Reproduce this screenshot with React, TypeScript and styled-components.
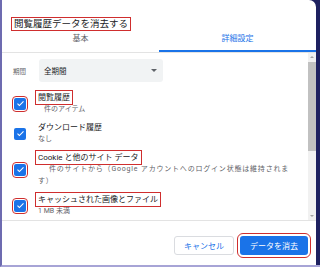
import React from "react";
import styled, { createGlobalStyle, css } from "styled-components";

const Global = createGlobalStyle`
  html, body { margin: 0; padding: 0; background: #1e2160; }
  body { width: 320px; height: 267px; overflow: hidden; }
  * { box-sizing: border-box; }
`;

const FONT = `Roboto, "Noto Sans CJK JP", "Noto Sans", sans-serif`;

const Frame = styled.div`
  width: 320px;
  height: 267px;
  display: flex;
  background: #1e2160;
  border-left: 2px solid #6d6bb0;
  border-bottom: 2px solid #a7a4d6;
  padding-right: 4px;
  font-family: ${FONT};
`;

const Dialog = styled.div`
  flex: 1;
  display: flex;
  flex-direction: column;
  background: #ffffff;
  border-top-right-radius: 7px;
  overflow: hidden;
`;

const Marked = css`
  outline: 1.5px solid #cf2e2e;
  outline-offset: 1px;
`;

const Header = styled.div`
  padding: 12px 0 0 11px;
  height: 28px;
`;

const Title = styled.span`
  display: inline-block;
  font-size: 9.5px;
  line-height: 10px;
  color: #202124;
  padding: 0 1px;
  ${Marked}
`;

const TabBar = styled.div`
  display: flex;
  height: 25px;
  border-bottom: 1px solid #e3e3e3;
`;

const Tab = styled.div<{ $active?: boolean }>`
  flex: 1;
  display: flex;
  align-items: center;
  justify-content: center;
  font-size: 8px;
  color: ${(p) => (p.$active ? "#1a73e8" : "#5f6368")};
  border-bottom: 2px solid ${(p) => (p.$active ? "#1a73e8" : "transparent")};
  padding-bottom: 3px;
`;

const Body = styled.div`
  height: 168px;
  display: flex;
  border-bottom: 1px solid #e3e3e3;
`;

const Content = styled.div`
  flex: 1;
  display: flex;
  flex-direction: column;
  padding: 6px 0 0 11px;
`;

const PeriodRow = styled.div`
  display: flex;
  align-items: center;
  gap: 13px;
  margin-bottom: 10px;
`;

const PeriodLabel = styled.span`
  font-size: 6.5px;
  color: #5f6368;
`;

const Select = styled.div`
  width: 124px;
  height: 23px;
  background: #f1f3f4;
  border-radius: 3px;
  display: flex;
  align-items: center;
  justify-content: space-between;
  padding: 0 5px 0 5px;
  font-size: 7.5px;
  color: #202124;
`;

const Caret = styled.span`
  width: 0;
  height: 0;
  border-left: 3px solid transparent;
  border-right: 3px solid transparent;
  border-top: 3.5px solid #5f6368;
  margin-right: 1px;
`;

const Item = styled.div`
  display: flex;
  align-items: center;
  margin-bottom: 7px;
`;

const CheckCell = styled.div`
  width: 24px;
  flex: none;
  display: flex;
  padding-left: 1px;
`;

const Box = styled.span<{ $marked?: boolean }>`
  width: 12px;
  height: 12px;
  border-radius: 2px;
  background: #1a73e8;
  display: flex;
  align-items: center;
  justify-content: center;
  ${(p) => p.$marked && Marked}
`;

const Texts = styled.div`
  display: flex;
  flex-direction: column;
  align-items: flex-start;
  width: 262px;
`;

const Label = styled.span<{ $marked?: boolean }>`
  font-size: 8px;
  line-height: 11px;
  color: #202124;
  padding: 0 1px;
  ${(p) => p.$marked && Marked}
`;

const Sub = styled.span<{ $indent?: number; $wide?: boolean }>`
  font-size: 7px;
  line-height: 12px;
  color: #5f6368;
  text-indent: ${(p) => p.$indent ?? 0}px;
  padding-left: 1px;
  letter-spacing: ${(p) => (p.$wide ? "0.8px" : "0")};
`;

const ScrollTrack = styled.div`
  width: 8px;
  flex: none;
  background: #f1f1f1;
  display: flex;
  flex-direction: column;
  align-items: center;
  padding: 3px 0 3px;
`;

const Arrow = styled.span<{ $down?: boolean }>`
  width: 0;
  height: 0;
  border-left: 2.5px solid transparent;
  border-right: 2.5px solid transparent;
  ${(p) =>
    p.$down
      ? "border-top: 2.5px solid #a3a3a3;"
      : "border-bottom: 2.5px solid #a3a3a3;"}
`;

const Thumb = styled.div`
  width: 8px;
  height: 89px;
  background: #c1c1c1;
  margin-top: 4px;
`;

const Spacer = styled.div`
  flex: 1;
`;

const Footer = styled.div`
  flex: 1;
  display: flex;
  justify-content: flex-end;
  align-items: flex-start;
  gap: 6px;
  padding: 15px 8px 0 0;
`;

const Button = styled.button<{ $primary?: boolean }>`
  height: 19px;
  border-radius: 3px;
  font-family: ${FONT};
  font-size: 8px;
  display: flex;
  align-items: center;
  justify-content: center;
  padding: 0;
  ${(p) =>
    p.$primary
      ? css`
          width: 68px;
          background: #1a73e8;
          color: #ffffff;
          border: none;
          outline: 1.5px solid #cf2e2e;
          outline-offset: 2px;
        `
      : css`
          width: 60px;
          background: #ffffff;
          color: #1a73e8;
          border: 1px solid #dadce0;
        `}
`;

const Check = () => (
  <svg width="9" height="9" viewBox="0 0 24 24">
    <path d="M4 12.5l5 5L20 6.5" fill="none" stroke="#fff" strokeWidth="3" />
  </svg>
);

export default function App() {
  return (
    <>
      <Global />
      <Frame>
        <Dialog>
          <Header>
            <Title>閲覧履歴データを消去する</Title>
          </Header>
          <TabBar>
            <Tab>基本</Tab>
            <Tab $active>詳細設定</Tab>
          </TabBar>
          <Body>
            <Content>
              <PeriodRow>
                <PeriodLabel>期間</PeriodLabel>
                <Select>
                  <span>全期間</span>
                  <Caret />
                </Select>
              </PeriodRow>
              <Item>
                <CheckCell>
                  <Box $marked>
                    <Check />
                  </Box>
                </CheckCell>
                <Texts>
                  <Label $marked>閲覧履歴</Label>
                  <Sub $indent={6}>件のアイテム</Sub>
                </Texts>
              </Item>
              <Item>
                <CheckCell>
                  <Box>
                    <Check />
                  </Box>
                </CheckCell>
                <Texts>
                  <Label>ダウンロード履歴</Label>
                  <Sub>なし</Sub>
                </Texts>
              </Item>
              <Item>
                <CheckCell>
                  <Box $marked>
                    <Check />
                  </Box>
                </CheckCell>
                <Texts>
                  <Label $marked>Cookie と他のサイト データ</Label>
                  <Sub $indent={11} $wide>
                    件のサイトから（Google アカウントへのログイン状態は維持されます）
                  </Sub>
                </Texts>
              </Item>
              <Item>
                <CheckCell>
                  <Box $marked>
                    <Check />
                  </Box>
                </CheckCell>
                <Texts>
                  <Label $marked>キャッシュされた画像とファイル</Label>
                  <Sub>1 MB 未満</Sub>
                </Texts>
              </Item>
            </Content>
            <ScrollTrack>
              <Arrow />
              <Thumb />
              <Spacer />
              <Arrow $down />
            </ScrollTrack>
          </Body>
          <Footer>
            <Button>キャンセル</Button>
            <Button $primary>データを消去</Button>
          </Footer>
        </Dialog>
      </Frame>
    </>
  );
}
